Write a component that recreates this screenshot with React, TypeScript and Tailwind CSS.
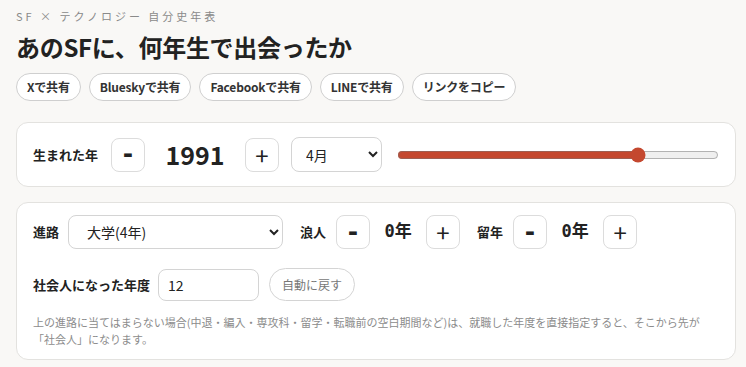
import { useState } from 'react'

const font = { fontFamily: '"Noto Sans CJK JP", "Noto Sans", sans-serif' }

function StepButton({ label, onClick }: { label: string; onClick: () => void }) {
  const isMinus = label === '-'
  return (
    <button
      type="button"
      onClick={onClick}
      style={isMinus ? { fontFamily: '"DejaVu Sans", sans-serif' } : undefined}
      className={
        'flex h-[34px] w-[34px] shrink-0 items-center justify-center rounded-lg border border-[#dcdcdc] bg-white leading-none text-[#222] ' +
        (isMinus ? 'pb-0.5 text-[25px] font-bold' : 'text-[24px] font-normal')
      }
    >
      {label}
    </button>
  )
}

function Counter({ label, value, setValue }: { label: string; value: number; setValue: (v: number) => void }) {
  return (
    <div className="flex items-center gap-2.5">
      <span className="text-[13px] font-bold text-[#222]">{label}</span>
      <StepButton label="-" onClick={() => setValue(Math.max(0, value - 1))} />
      <span
        className="w-9 text-center text-[17px] font-bold text-[#222]"
        style={{ fontFamily: '"DejaVu Sans Mono", "Noto Sans CJK JP", monospace' }}
      >
        {value}年
      </span>
      <StepButton label="+" onClick={() => setValue(value + 1)} />
    </div>
  )
}

export default function App() {
  const [year, setYear] = useState(1991)
  const [month, setMonth] = useState('4')
  const [course, setCourse] = useState('univ4')
  const [ronin, setRonin] = useState(0)
  const [ryunen, setRyunen] = useState(0)
  const [workYear, setWorkYear] = useState('12')

  const shareButtons = ['Xで共有', 'Blueskyで共有', 'Facebookで共有', 'LINEで共有', 'リンクをコピー']

  return (
    <div className="min-h-[367px] bg-[#f9f8f6] text-[#222]" style={font}>
      <div className="w-[736px] pl-4 pt-2">
        <p className="text-[11px] leading-4 tracking-[3px] text-[#8a8a8a]">SF × テクノロジー 自分史年表</p>
        <h1 className="mt-[7px] text-[24px] font-bold leading-8 tracking-[-0.3px] text-[#222]">
          あのSFに、何年生で出会ったか
        </h1>

        <div className="mt-2.5 flex gap-2">
          {shareButtons.map((b) => (
            <button
              key={b}
              type="button"
              className="h-7 rounded-full border border-[#cfcfcf] bg-white px-[10px] text-[12px] font-bold tracking-[-0.2px] text-[#333]"
            >
              {b}
            </button>
          ))}
        </div>

        <section className="mt-[21px] flex items-center gap-3 rounded-xl border border-[#e3e2df] bg-white px-4 py-3.5">
          <span className="mr-px text-[13px] font-bold">生まれた年</span>
          <StepButton label="-" onClick={() => setYear(year - 1)} />
          <span className="w-[76px] text-center text-[25px] font-bold leading-none">{year}</span>
          <StepButton label="+" onClick={() => setYear(year + 1)} />
          <select
            value={month}
            onChange={(e) => setMonth(e.target.value)}
            className="h-[35px] w-[91px] rounded-lg border border-[#d4d4d4] bg-white pl-2.5 pr-1.5 text-[14px] text-[#222]"
          >
            {Array.from({ length: 12 }, (_, i) => (
              <option key={i} value={String(i + 1)}>
                {i + 1}月
              </option>
            ))}
          </select>
          <input
            type="range"
            min={1930}
            max={2010}
            value={year}
            onChange={(e) => setYear(Number(e.target.value))}
            className="ml-[3px] flex-1 accent-[#c4482f]"
          />
        </section>

        <section className="mt-[15px] rounded-xl border border-[#e3e2df] bg-white px-4 pb-3 pt-3">
          <div className="flex items-center gap-[17px]">
            <div className="flex items-center gap-[9px]">
              <span className="text-[13px] font-bold">進路</span>
              <select
                value={course}
                onChange={(e) => setCourse(e.target.value)}
                className="h-[34px] w-[215px] rounded-lg border border-[#d4d4d4] bg-white pl-3.5 pr-1.5 text-[14px] text-[#222]"
              >
                <option value="high">高校</option>
                <option value="senmon">専門学校(2年)</option>
                <option value="univ4">大学(4年)</option>
                <option value="master">大学院(修士)</option>
              </select>
            </div>
            <Counter label="浪人" value={ronin} setValue={setRonin} />
            <Counter label="留年" value={ryunen} setValue={setRyunen} />
          </div>

          <div className="mt-[19px] flex items-center gap-2.5">
            <span className="mr-[-2px] text-[13px] font-bold">社会人になった年度</span>
            <input
              type="text"
              value={workYear}
              onChange={(e) => setWorkYear(e.target.value)}
              className="h-8 w-[101px] rounded-lg border border-[#d4d4d4] bg-white px-[9px] text-[14px] text-[#222] focus:outline-none"
            />
            <button
              type="button"
              onClick={() => setWorkYear('')}
              className="h-[33px] rounded-full border border-[#d4d4d4] bg-white px-3 text-[12px] text-[#777]"
            >
              自動に戻す
            </button>
          </div>

          <p className="mt-[13px] max-w-[670px] text-[11px] leading-[16.5px] text-[#8c8c8c]">
            上の進路に当てはまらない場合(中退・編入・専攻科・留学・転職前の空白期間など)は、就職した年度を直接指定すると、そこから先が「社会人」になります。
          </p>
        </section>
      </div>
    </div>
  )
}
